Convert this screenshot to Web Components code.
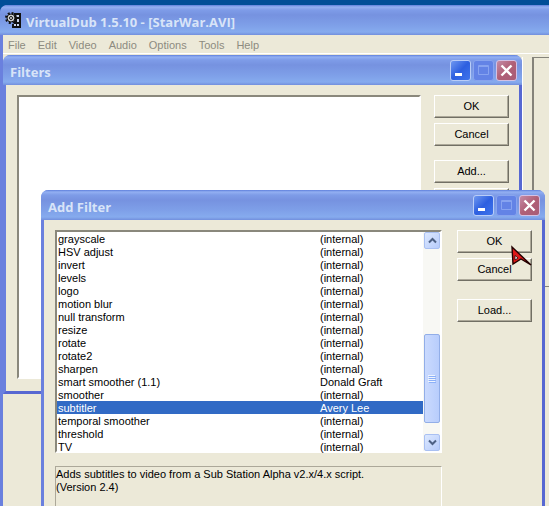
<!DOCTYPE html>
<html lang="en"><head><meta charset="utf-8"><title>VirtualDub</title>
<style>
html,body{height:100%;margin:0}
body{overflow:hidden;background:#004e98;font:11px/13px "Liberation Sans",Arial,sans-serif;color:#000}
</style></head><body>
<vd-desktop></vd-desktop>
<script>
const define=(name,html,setup)=>customElements.define(name,class extends HTMLElement{
  constructor(){super();this.attachShadow({mode:'open'}).innerHTML=html;}
  connectedCallback(){if(setup)setup(this,this.shadowRoot);}
});

define('xp-caption-buttons',`<style>
:host{display:flex;gap:2px}
button{width:21px;height:21px;padding:0;border:1px solid #b9cdf8;border-radius:3px;background:linear-gradient(135deg,#6f98f0,#2d5fe0 50%,#3f74ec);display:grid;place-items:center}
button:disabled{background:#6383e6;border-color:#88a4ee}
.close{background:linear-gradient(135deg,#c48ba6,#b05f76 50%,#a85d78);border-color:#d3c1e4}
svg{width:19px;height:19px;display:block}
</style>
<button aria-label="Minimize"><svg viewBox="0 0 19 19"><path d="M4 12h7v3H4z" fill="#fff"/></svg></button>
<button aria-label="Maximize" disabled><svg viewBox="0 0 19 19"><path d="M4.500 4.500h10v9h-10zM4.500 5.500h10" fill="none" stroke="#87a3f0"/></svg></button>
<button class="close" aria-label="Close"><svg viewBox="0 0 19 19"><path d="M4.500 4.500l10 10M14.500 4.500l-10 10" stroke="#fff" stroke-width="2.400"/></svg></button>`);

define('xp-window',`<style>
:host{display:flex;flex-direction:column;box-sizing:border-box;background:#ece9d8;border:solid #6a80de;border-right-color:#5768d2;border-bottom-color:#5768d2;border-width:0 3px 3px;border-radius:8px 8px 0 0}
header{display:flex;align-items:center;height:30px;flex:none;margin:0 -3px;padding:0 5px;box-sizing:border-box;border-radius:7px 7px 0 0;
background:linear-gradient(#5e7fdc 0,#93b0f2 2px,#7e9ce8 5px,#7692e0 10px,#7e9fe8 20px,#86abee 27px,#728fdd 30px)}
h1{flex:1;margin:0;padding:3px 0 0 2px;font:bold 13px/20px "Open Sans","Noto Sans",sans-serif;color:#d8e4f8;white-space:nowrap}
::slotted(film-icon){margin-right:2px}
main{flex:1;min-height:0;display:flex;flex-direction:column}
</style><header><slot name="icon"></slot><h1></h1><slot name="buttons"></slot></header><main><slot></slot></main>`,
(h,r)=>{r.querySelector('h1').textContent=h.getAttribute('caption');});

define('xp-button',`<style>
:host{display:block}
button{width:100%;height:23px;padding:0;border:1px solid;border-color:#fff #716f64 #716f64 #fff;box-shadow:inset -1px -1px #aca899;background:#ece9d8;font:11px/13px "Liberation Sans",Arial,sans-serif;color:#000}
</style><button><slot></slot></button>`);

define('film-icon',`<style>:host{display:block;width:17px;height:17px}svg{display:block}</style>
<svg width="17" height="17" viewBox="0 0 17 17"><path d="M9 1h7v15H7v-4h2z" fill="#111"/><path d="M11 3h3v2h-3zM12 7h2v3h-2zM9 12h2v2H9zM12 12h2v2h-2z" fill="#c9d4ee"/>
<circle cx="6" cy="6" r="5" fill="none" stroke="#111" stroke-width="2" stroke-dasharray="2 1.930"/><circle cx="6" cy="6" r="4" fill="#ccc" stroke="#111"/><circle cx="6" cy="6" r="1.500" fill="#eee" stroke="#111"/></svg>`);

define('menu-bar',`<style>
:host{display:flex;gap:12px;padding:2px 5px 0;height:18px;box-sizing:border-box}
button{border:0;padding:0;background:none;font:11px/14px "Liberation Sans",Arial,sans-serif;color:#8d8b80}
</style>`+['File','Edit','Video','Audio','Options','Tools','Help'].map(t=>`<button>${t}</button>`).join(''));

define('xp-scrollbar',`<style>
:host{display:flex;flex-direction:column;width:17px;background:#f8f8f4;box-sizing:border-box;padding-left:1px}
button{height:17px;border:1px solid #a9c0f2;border-radius:2px;padding:0;background:linear-gradient(135deg,#dce8ff,#b7ccfb);display:grid;place-items:center;flex:none}
.track{flex:1;display:flex;flex-direction:column}
.thumb{margin-top:85px;height:89px;box-sizing:border-box;border:1px solid #92aee8;border-radius:2px;background:linear-gradient(90deg,#cadafe,#b8cdfc);display:grid;place-items:center}
svg{display:block}
</style>
<button aria-label="Scroll up"><svg width="9" height="7"><path d="M1 5.500l3.500-3.500L8 5.500" fill="none" stroke="#4d6185" stroke-width="2"/></svg></button>
<div class="track"><div class="thumb"><svg width="8" height="8"><path d="M0 .5h7M0 2.500h7M0 4.500h7M0 6.500h7" stroke="#eef4fe"/><path d="M1 1.500h7M1 3.500h7M1 5.500h7M1 7.500h7" stroke="#8cb0f8"/></svg></div></div>
<button aria-label="Scroll down"><svg width="9" height="7"><path d="M1 1.500L4.500 5 8 1.500" fill="none" stroke="#4d6185" stroke-width="2"/></svg></button>`);

const rows=[['grayscale'],['HSV adjust'],['invert'],['levels'],['logo'],['motion blur'],['null transform'],['resize'],['rotate'],['rotate2'],['sharpen'],['smart smoother (1.1)','Donald Graft'],['smoother'],['subtitler','Avery Lee'],['temporal smoother'],['threshold'],['TV']];
define('filter-list',`<style>
:host{display:flex;height:223px;box-sizing:border-box;border:2px solid;border-color:#8a887c #fff #fff #8a887c;background:#fff}
.view{flex:1}
table{width:100%;border-collapse:collapse;table-layout:fixed}
td{padding:2px 0 0 1px;height:11px;line-height:11px;white-space:nowrap}
td:first-child{width:261px}
tr[aria-selected=true]{background:#316ac5;color:#fff}
</style><div class="view"><table aria-label="Available filters"><tbody>${rows.map(([n,a='(internal)'])=>`<tr${n=='subtitler'?' aria-selected="true"':''}><td>${n}</td><td>${a}</td></tr>`).join('')}</tbody></table></div><xp-scrollbar></xp-scrollbar>`);

define('filters-dialog',`<style>
:host{display:block}
xp-window{height:100%}
.body{display:grid;grid-template-columns:1fr 75px;gap:13px;padding:10px 10px 12px 11px;flex:1;box-sizing:border-box}
.box{background:#fff;border:2px solid;border-color:#8a887c #fff #fff #8a887c}
.col{display:flex;flex-direction:column;gap:5px}
.gap{margin-top:9px}
</style><xp-window caption="Filters"><xp-caption-buttons slot="buttons"></xp-caption-buttons>
<div class="body"><div class="box"></div><div class="col"><xp-button>OK</xp-button><xp-button>Cancel</xp-button><xp-button class="gap">Add...</xp-button><xp-button>Delete</xp-button></div></div></xp-window>`);

define('add-filter-dialog',`<style>
:host{display:block}
xp-window{height:100%}
.body{display:grid;grid-template-columns:1fr 75px;gap:15px;padding:10px 10px 0 11px}
.left{display:flex;flex-direction:column;gap:13px}
.col{display:flex;flex-direction:column;gap:5px}
.gap{margin-top:13px}
p{margin:0;height:70px;padding:1px 0;border:1px solid;border-color:#aca899 #fff #fff #aca899}
</style><xp-window caption="Add Filter"><xp-caption-buttons slot="buttons"></xp-caption-buttons>
<div class="body"><div class="left"><filter-list></filter-list><p>Adds subtitles to video from a Sub Station Alpha v2.x/4.x script.<br>(Version 2.4)</p></div>
<div class="col"><xp-button>OK</xp-button><xp-button>Cancel</xp-button><xp-button class="gap">Load...</xp-button></div></div></xp-window>`);

define('vd-desktop',`<style>
:host{display:block;position:relative;height:100%;overflow:hidden}
.app{position:absolute;left:0;top:5px;right:-12px;bottom:-20px}
.filters{position:absolute;left:3px;top:55px;width:519px;height:339px}
.add{position:absolute;left:41px;top:190px;width:504px;height:350px}
.pointer{position:absolute;left:510px;top:245px}
.client{flex:1;display:flex;justify-content:flex-end;border-top:1px solid #fff;padding-top:3px}
.left{flex:1;margin-right:9px;border-right:1px solid #fff}
.pane{width:24px;border-left:2px solid #85837a;border-top:1px solid #85837a;display:flex;flex-direction:column}
.pane i{height:228px;border-bottom:1px solid #85837a}
</style>
<xp-window class="app" caption="VirtualDub 1.5.10 - [StarWar.AVI]"><film-icon slot="icon"></film-icon><menu-bar></menu-bar><div class="client"><div class="left"></div><div class="pane"><i></i></div></div></xp-window>
<filters-dialog class="filters"></filters-dialog>
<add-filter-dialog class="add"></add-filter-dialog>
<svg class="pointer" width="23" height="22" viewBox="0 0 23 22"><path d="M2 2L21 20 11 14 3 19z" fill="#e01818" stroke="#200" stroke-width="1.400"/><path d="M5 10.500l3 2.500-3 2z" fill="#fff" stroke="#200" stroke-width=".8"/></svg>`);
</script></body></html>
